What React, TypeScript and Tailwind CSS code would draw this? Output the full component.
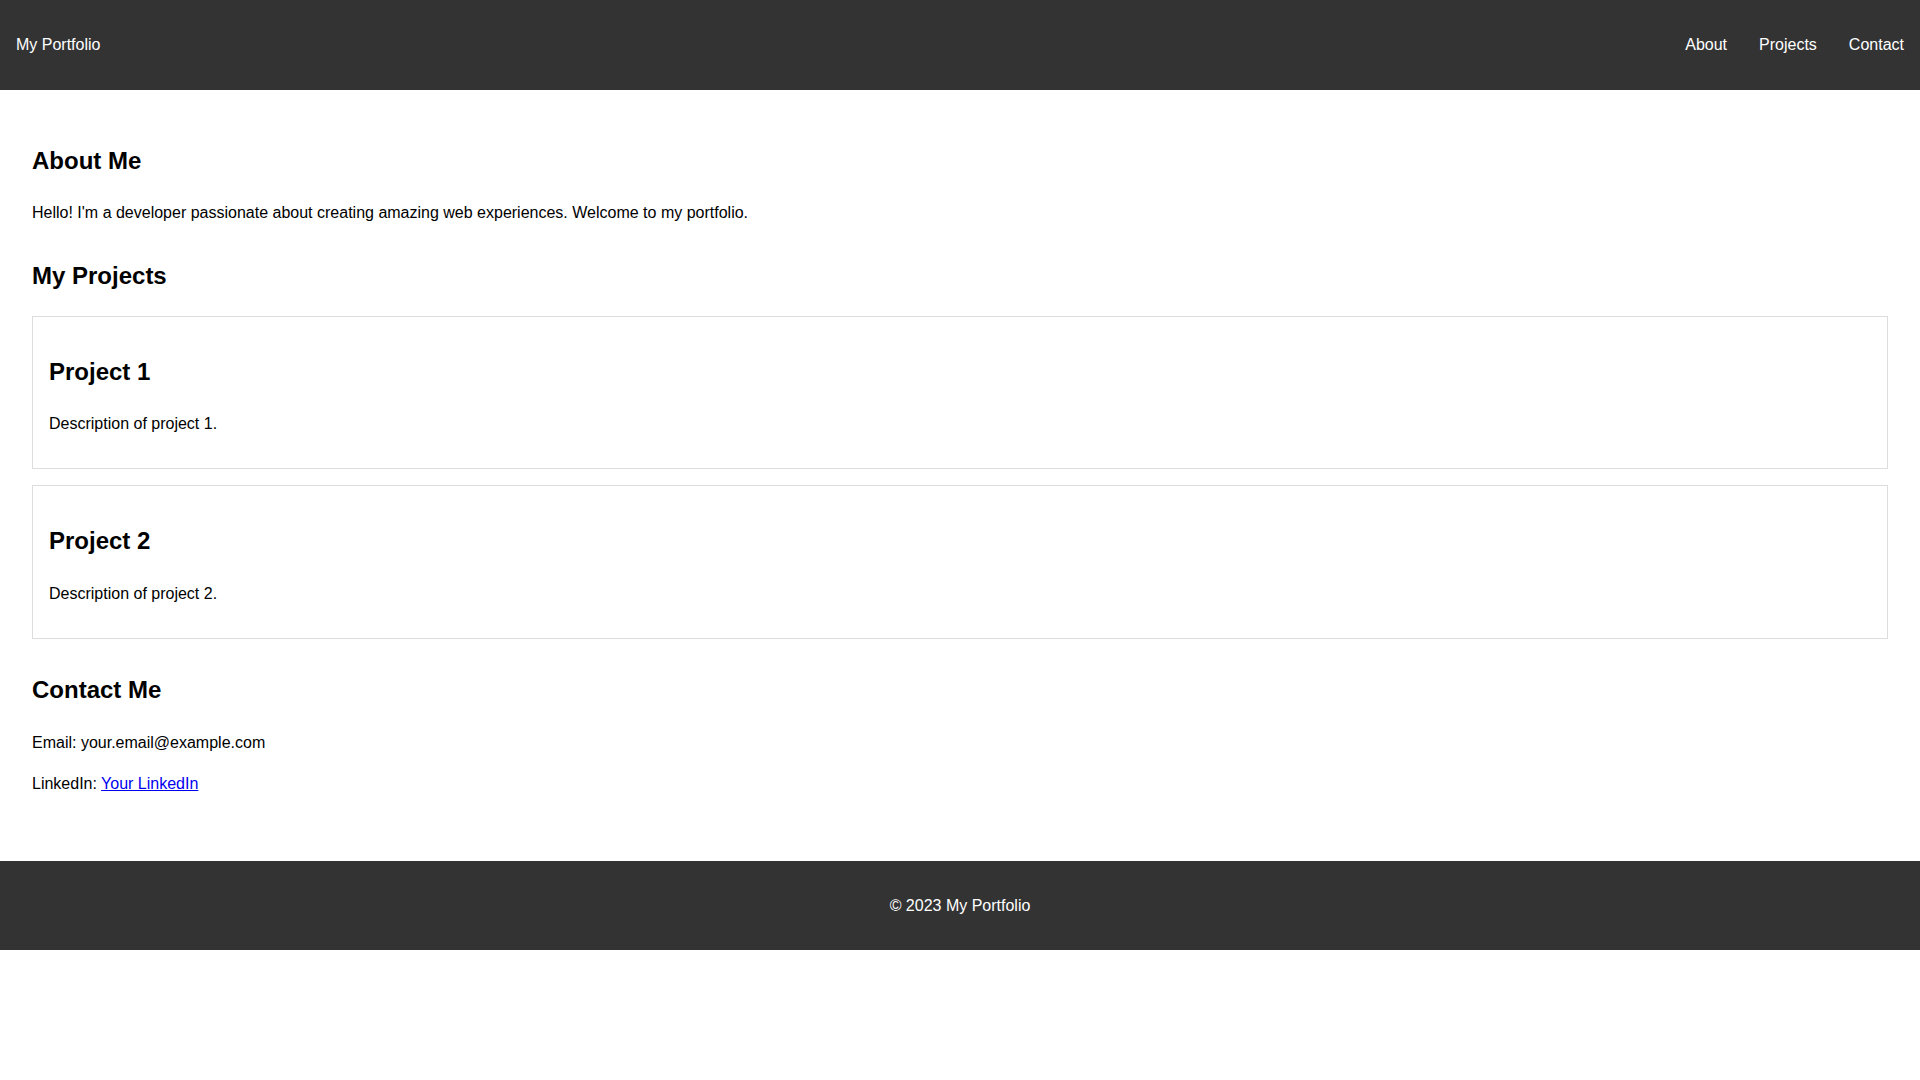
import React from "react";

export default function App() {
  return (
    <div className="min-h-screen bg-white text-black font-['Liberation_Sans',Arial,sans-serif] text-base leading-[1.6]">
      <header className="bg-[#333333] text-white px-4 py-4 flex items-center justify-between">
        <div>My Portfolio</div>
        <nav>
          <ul className="flex gap-8 my-4 list-none">
            <li>
              <a href="#about" className="text-white no-underline">About</a>
            </li>
            <li>
              <a href="#projects" className="text-white no-underline">Projects</a>
            </li>
            <li>
              <a href="#contact" className="text-white no-underline">Contact</a>
            </li>
          </ul>
        </nav>
      </header>

      <main className="p-8">
        <section id="about" className="mb-8">
          <h2 className="text-2xl font-bold leading-[1.6] my-[19.92px]">About Me</h2>
          <p className="my-4">
            Hello! I'm a developer passionate about creating amazing web experiences. Welcome to my portfolio.
          </p>
        </section>

        <section id="projects" className="mb-8">
          <h2 className="text-2xl font-bold leading-[1.6] my-[19.92px]">My Projects</h2>
          <div className="border border-[#dddddd] p-4 mb-4">
            <h3 className="text-2xl font-bold leading-[1.6] my-[19.92px]">Project 1</h3>
            <p className="my-4">Description of project 1.</p>
          </div>
          <div className="border border-[#dddddd] p-4 mb-4">
            <h3 className="text-2xl font-bold leading-[1.6] my-[19.92px]">Project 2</h3>
            <p className="my-4">Description of project 2.</p>
          </div>
        </section>

        <section id="contact" className="mb-8">
          <h2 className="text-2xl font-bold leading-[1.6] my-[19.92px]">Contact Me</h2>
          <p className="my-4">Email: your.email@example.com</p>
          <p className="my-4">
            LinkedIn:{" "}
            <a href="#" className="text-[#0000ee] underline">
              Your LinkedIn
            </a>
          </p>
        </section>
      </main>

      <footer className="bg-[#333333] text-white text-center p-4">
        <p className="my-4">© 2023 My Portfolio</p>
      </footer>
    </div>
  );
}
